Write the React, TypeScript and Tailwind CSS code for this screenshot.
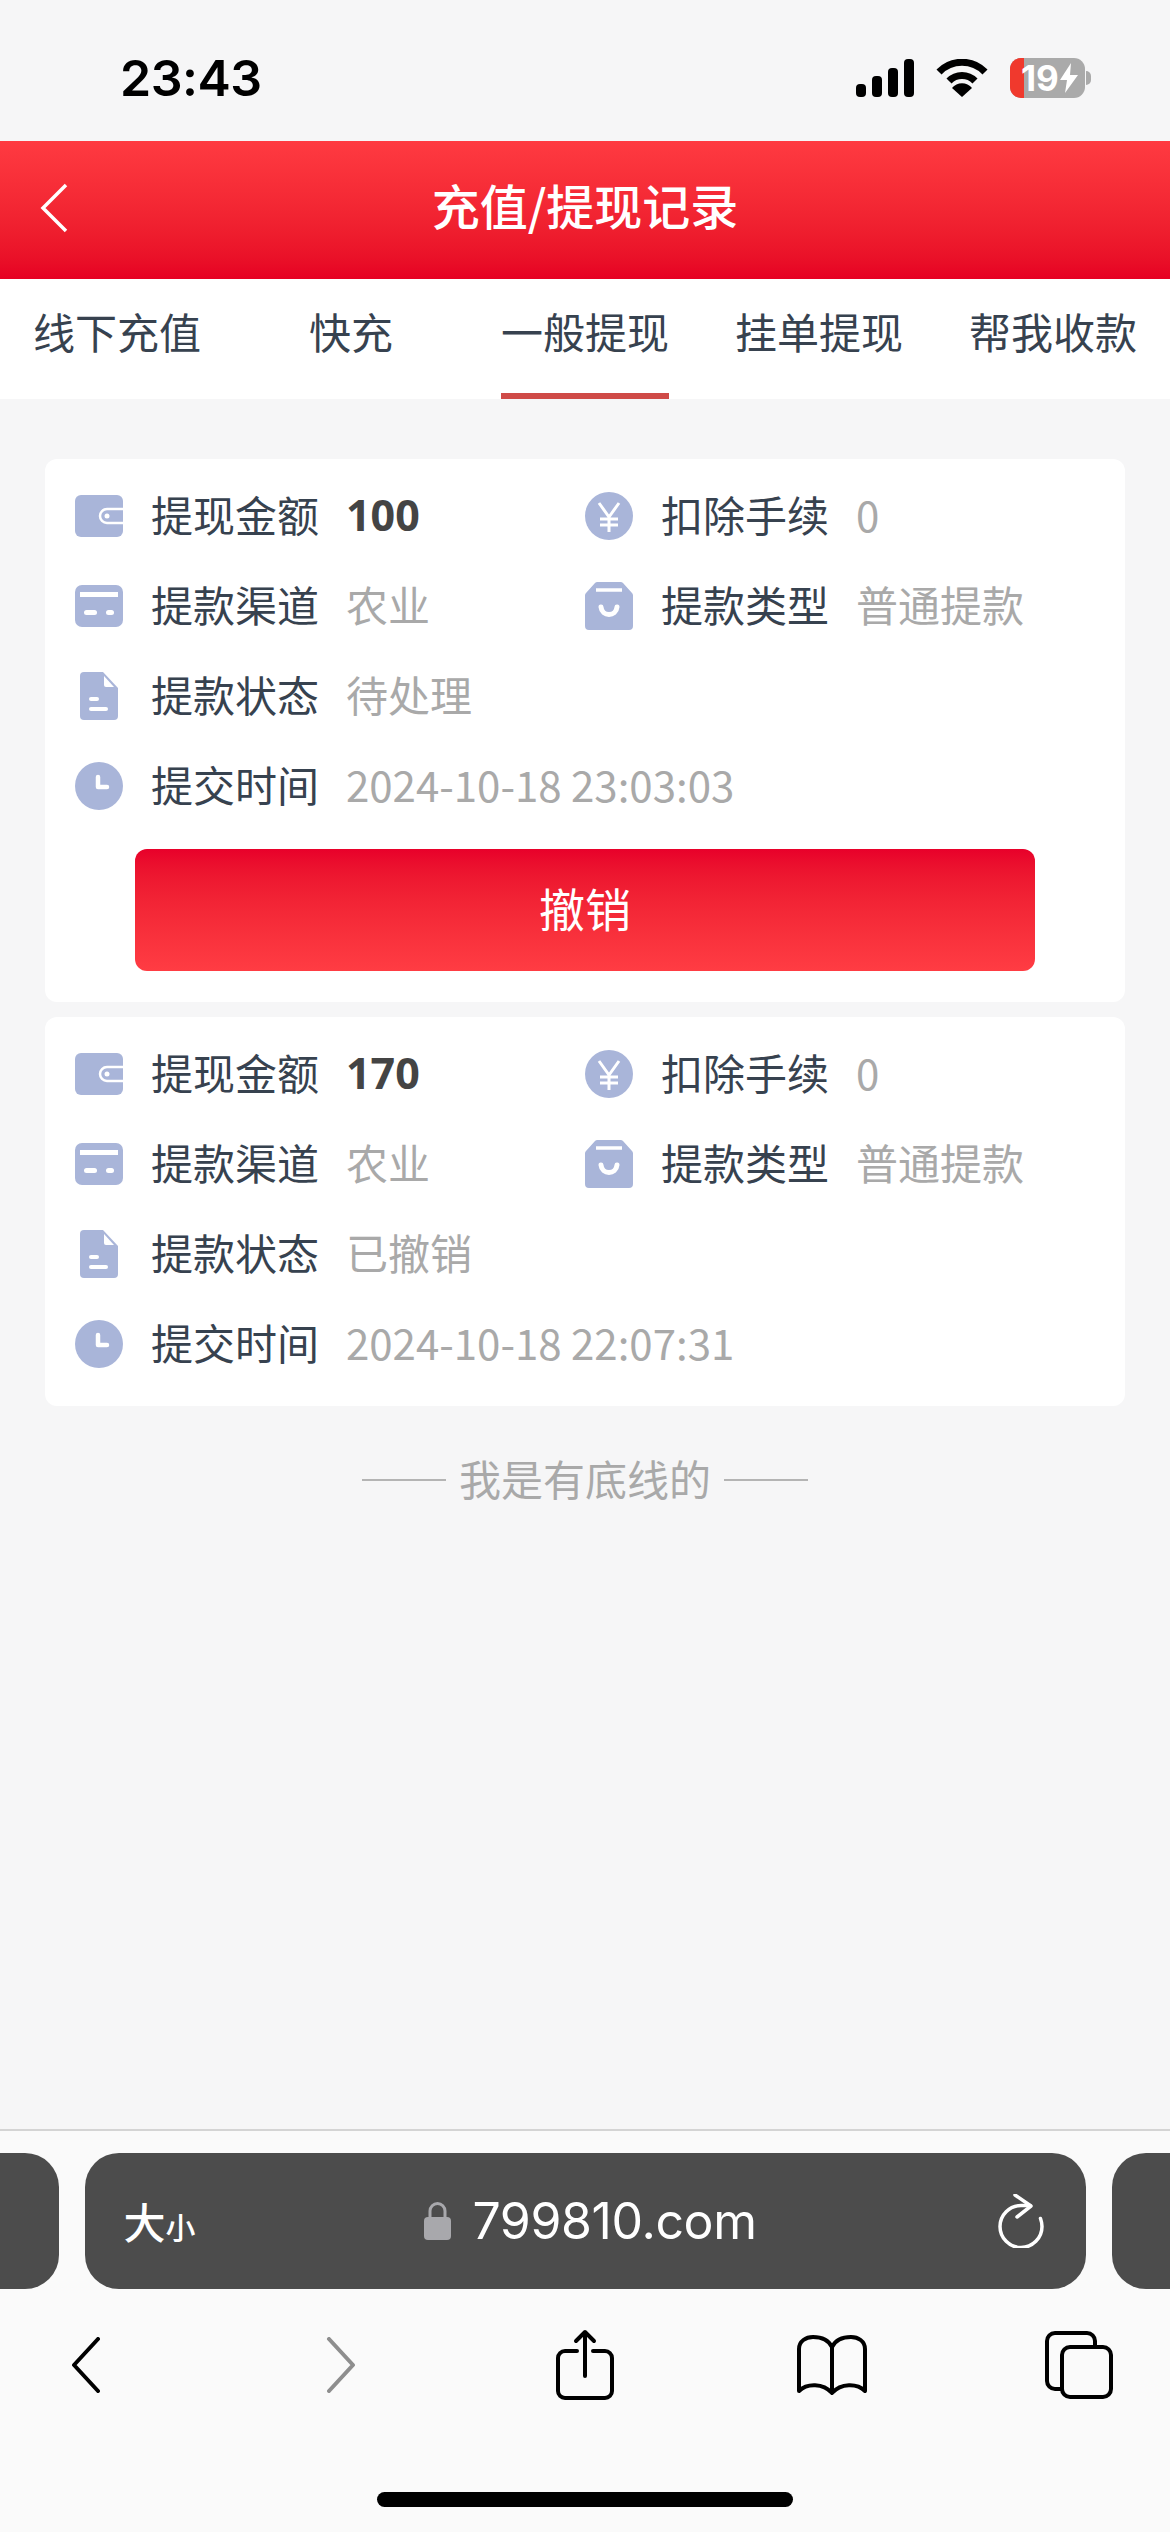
import type { ReactNode } from "react";

const tabs = ["线下充值", "快充", "一般提现", "挂单提现", "帮我收款"];

const WalletIcon = () => (
  <svg width="48" height="42" viewBox="0 0 48 42">
    <path d="M6 0h36a6 6 0 0 1 6 6v30a6 6 0 0 1-6 6H6a6 6 0 0 1-6-6V6a6 6 0 0 1 6-6z" fill="#a9b5d9" />
    <path d="M48 14H32a7 7 0 0 0 0 14h16" fill="none" stroke="#fff" strokeWidth="2.500" />
    <circle cx="32" cy="21" r="2.500" fill="#fff" />
  </svg>
);

const CardIcon = () => (
  <svg width="48" height="42" viewBox="0 0 48 42">
    <rect width="48" height="42" rx="7" fill="#a9b5d9" />
    <rect x="5" y="7" width="38" height="5" fill="#fff" />
    <rect x="9" y="25" width="13" height="5" rx="2.500" fill="#fff" />
    <rect x="31" y="25" width="8" height="5" rx="2.500" fill="#fff" />
  </svg>
);

const DocIcon = () => (
  <svg width="38" height="48" viewBox="0 0 38 48">
    <path d="M4 0h19l15 16v28a4 4 0 0 1-4 4H4a4 4 0 0 1-4-4V4a4 4 0 0 1 4-4z" fill="#a9b5d9" />
    <path d="M24 4l10 11h-8a2 2 0 0 1-2-2z" fill="#fff" />
    <rect x="9" y="25" width="10" height="4" rx="2" fill="#fff" />
    <rect x="9" y="35" width="19" height="4" rx="2" fill="#fff" />
  </svg>
);

const ClockIcon = () => (
  <svg width="48" height="48" viewBox="0 0 48 48">
    <circle cx="24" cy="24" r="24" fill="#a9b5d9" />
    <path d="M23 15v10h9" fill="none" stroke="#fff" strokeWidth="4.500" strokeLinecap="round" strokeLinejoin="round" />
  </svg>
);

const YuanIcon = () => (
  <svg width="48" height="48" viewBox="0 0 48 48">
    <circle cx="24" cy="24" r="24" fill="#a9b5d9" />
    <path d="M14 11l10 14 10-14M24 25v15M15 27h18M15 33h18" fill="none" stroke="#fff" strokeWidth="3" />
  </svg>
);

const BagIcon = () => (
  <svg width="48" height="48" viewBox="0 0 48 48">
    <path d="M13 0h22a4 4 0 0 1 3 1l9 10a4 4 0 0 1 1 3v30a4 4 0 0 1-4 4H4a4 4 0 0 1-4-4V14a4 4 0 0 1 1-3l9-10a4 4 0 0 1 3-1z" fill="#a9b5d9" />
    <path d="M11 8h26" stroke="#fff" strokeWidth="3.500" />
    <path d="M16 25c1 10 15 10 16 0" fill="none" stroke="#fff" strokeWidth="5" strokeLinecap="round" />
  </svg>
);

const Field = ({
  icon,
  label,
  children,
  wide,
}: {
  icon: ReactNode;
  label: string;
  children: ReactNode;
  wide?: boolean;
}) => (
  <div className={`flex items-center ${wide ? "w-[510px]" : ""}`}>
    <div className="flex w-[48px] items-center justify-center">{icon}</div>
    <span className="ml-[28px] w-[196px] pb-[5px] text-[42px] leading-none text-[#37424f]">{label}</span>
    {children}
  </div>
);

const Muted = ({ children }: { children: ReactNode }) => (
  <span className="-ml-px pb-[5px] text-[42px] leading-none whitespace-nowrap text-[#a9a9a9]">{children}</span>
);

const RecordCard = ({
  amount,
  status,
  time,
  cancellable,
}: {
  amount: string;
  status: string;
  time: string;
  cancellable?: boolean;
}) => (
  <div className={`rounded-[12px] bg-white px-[30px] pt-[12px] ${cancellable ? "pb-[31px]" : "pb-[17px]"}`}>
    <div className="flex h-[90px] items-center">
      <Field wide icon={<WalletIcon />} label="提现金额">
        <span className="-ml-px pb-[3px] text-[43px] leading-none font-bold text-[#444444]" style={{ fontFamily: '"Open Sans", sans-serif' }}>
          {amount}
        </span>
      </Field>
      <Field icon={<YuanIcon />} label="扣除手续">
        <Muted>0</Muted>
      </Field>
    </div>
    <div className="flex h-[90px] items-center">
      <Field wide icon={<CardIcon />} label="提款渠道">
        <Muted>农业</Muted>
      </Field>
      <Field icon={<BagIcon />} label="提款类型">
        <Muted>普通提款</Muted>
      </Field>
    </div>
    <div className="flex h-[90px] items-center">
      <Field icon={<DocIcon />} label="提款状态">
        <Muted>{status}</Muted>
      </Field>
    </div>
    <div className="flex h-[90px] items-center">
      <Field icon={<ClockIcon />} label="提交时间">
        <Muted>{time}</Muted>
      </Field>
    </div>
    {cancellable && (
      <button className="mx-auto mt-[18px] flex h-[122px] w-[900px] items-center justify-center rounded-[12px] bg-gradient-to-b from-[#e8002a] to-[#ff3c43] pb-[6px] text-[46px] text-white">
        撤销
      </button>
    )}
  </div>
);

const StatusBar = () => (
  <div className="flex h-[141px] items-center justify-between pt-[15px] pr-[79px] pl-[120px]">
    <span className="text-[50px] leading-none font-semibold tracking-[-0.5px] text-black" style={{ fontFamily: "Inter, sans-serif" }}>
      23:43
    </span>
    <div className="flex items-center">
      <svg width="58" height="38" viewBox="0 0 58 38">
        <rect x="0" y="25" width="10" height="13" rx="4" fill="#000" />
        <rect x="16" y="17" width="10" height="21" rx="4" fill="#000" />
        <rect x="32" y="9" width="10" height="29" rx="4" fill="#000" />
        <rect x="48" y="0" width="10" height="38" rx="4" fill="#000" />
      </svg>
      <svg className="ml-[22px]" width="52" height="38" viewBox="0 0 52 38">
        <path d="M3 13a32 32 0 0 1 46 0" fill="none" stroke="#000" strokeWidth="7" />
        <path d="M13 22a18 18 0 0 1 26 0" fill="none" stroke="#000" strokeWidth="7" />
        <path d="M26 38L16 29a13 13 0 0 1 20 0z" fill="#000" />
      </svg>
      <div className="relative ml-[22px] flex h-[40px] w-[75px] items-center overflow-hidden rounded-[11px] bg-[#aaaaaa] pl-[11px] text-white">
        <div className="absolute top-0 bottom-0 left-0 w-[14px] bg-[#f0392d]" />
        <span className="relative text-[35px] leading-none font-bold" style={{ fontFamily: "Inter, sans-serif" }}>
          19
        </span>
        <svg className="relative" width="20" height="30" viewBox="0 0 20 30">
          <path d="M12 0L1 17h7l-2 13 13-18h-8z" fill="#fff" />
        </svg>
      </div>
      <div className="ml-[1px] h-[14px] w-[5px] rounded-r-full bg-[#aaaaaa]" />
    </div>
  </div>
);

const BrowserChrome = () => (
  <div className="h-[403px] border-t-2 border-[#d4d4d4] bg-[#fafafa]">
    <div className="flex justify-center gap-[26px] overflow-hidden pt-[22px]">
      <div className="h-[136px] w-[1001px] shrink-0 rounded-[34px] bg-[#4c4c4c]" />
      <div className="flex h-[136px] w-[1001px] shrink-0 items-center justify-between rounded-[34px] bg-[#4c4c4c] pr-[42px] pl-[39px] text-white">
        <div className="flex w-[60px] items-baseline leading-none whitespace-nowrap">
          <span className="text-[42px] font-medium">大</span>
          <span className="text-[30px] font-medium">小</span>
        </div>
        <div className="flex items-center">
          <svg width="27" height="38" viewBox="0 0 27 38">
            <path d="M6 17V9a7.500 7.500 0 0 1 15 0v8" fill="none" stroke="#a8a8ac" strokeWidth="3" />
            <rect y="15" width="27" height="23" rx="4" fill="#a8a8ac" />
          </svg>
          <span className="ml-[21px] text-[50px] leading-none tracking-[-0.4px]" style={{ fontFamily: "Inter, sans-serif" }}>
            799810.com
          </span>
        </div>
        {/* reload: open circle with the arrow head at twelve o'clock */}
        <svg width="46" height="54" viewBox="0 0 46 54" fill="none" stroke="#fff" strokeWidth="3.500" strokeLinecap="round" strokeLinejoin="round">
          <path d="M32 11.500h-9a21 21 0 1 0 21 21c0-3-.6-5.500-1.500-8" />
          <path d="M17 1l16 11-14 11" />
        </svg>
      </div>
      <div className="h-[136px] w-[1001px] shrink-0 rounded-[34px] bg-[#4c4c4c]" />
    </div>
    <div className="flex h-[195px] items-start pt-[40px] pl-[46px]">
      <div className="flex h-[72px] w-[80px] items-center justify-center">
        <svg width="30" height="56" viewBox="0 0 30 56" fill="none" stroke="#000" strokeWidth="4" strokeLinecap="round" strokeLinejoin="round">
          <path d="M27 2L3 28l24 26" />
        </svg>
      </div>
      <div className="ml-[175px] flex h-[72px] w-[80px] items-center justify-center">
        <svg width="30" height="56" viewBox="0 0 30 56" fill="none" stroke="#8e8e8e" strokeWidth="4" strokeLinecap="round" strokeLinejoin="round">
          <path d="M3 2l24 26L3 54" />
        </svg>
      </div>
      <div className="ml-[164px] flex h-[72px] w-[80px] items-center justify-center">
        <svg width="58" height="72" viewBox="0 0 58 72" fill="none" stroke="#000" strokeWidth="4" strokeLinecap="round" strokeLinejoin="round">
          <path d="M21 22H9a7 7 0 0 0-7 7v33a7 7 0 0 0 7 7h40a7 7 0 0 0 7-7V29a7 7 0 0 0-7-7H37" />
          <path d="M29 47V3M20 12l9-9 9 9" />
        </svg>
      </div>
      <div className="ml-[167px] flex h-[72px] w-[80px] items-center justify-center">
        <svg width="72" height="60" viewBox="0 0 72 60" fill="none" stroke="#000" strokeWidth="4" strokeLinejoin="round">
          <path d="M36 12C32 4 24 2 17 2 10 2 3 6 3 14v42c8-8 24-8 33 2 9-10 25-10 33-2V14c0-8-7-12-14-12-7 0-15 2-19 10zM36 12v46" />
        </svg>
      </div>
      <div className="ml-[167px] flex h-[72px] w-[80px] items-center justify-center">
        <svg width="68" height="68" viewBox="0 0 68 68" fill="none" stroke="#000" strokeWidth="4">
          <path d="M50 16V10a8 8 0 0 0-8-8H10a8 8 0 0 0-8 8v40a8 8 0 0 0 8 8h6" />
          <rect x="17" y="16" width="49" height="50" rx="8" />
        </svg>
      </div>
    </div>
    <div className="flex justify-center pt-[8px]">
      <div className="h-[15px] w-[416px] rounded-full bg-black" />
    </div>
  </div>
);

export default function App() {
  return (
    <div
      className="flex h-[2532px] w-[1170px] flex-col overflow-hidden bg-[#f6f6f7]"
      style={{ fontFamily: '"Noto Sans CJK SC", "Noto Sans", sans-serif' }}
    >
      <StatusBar />
      <header className="relative flex h-[138px] items-center justify-center bg-gradient-to-b from-[#ff3a41] to-[#e60023] pb-[12px]">
        <svg className="absolute top-[42px] left-[40px]" width="28" height="50" viewBox="0 0 28 50" fill="none" stroke="#fff" strokeWidth="3.500">
          <path d="M26 2L3 25l23 23" />
        </svg>
        <h1 className="text-[48px] leading-none font-medium text-white">充值/提现记录</h1>
      </header>
      <nav className="flex h-[120px] bg-white">
        {tabs.map((tab) => (
          <div key={tab} className="relative flex w-[234px] items-start justify-center pt-[30px] text-[42px] leading-[44px] text-[#37424f]">
            {tab}
            {tab === "一般提现" && <div className="absolute bottom-0 left-1/2 h-[6px] w-[168px] -translate-x-1/2 bg-[#cf4a47]" />}
          </div>
        ))}
      </nav>
      <main className="flex flex-1 flex-col gap-[15px] px-[45px] pt-[60px]">
        <RecordCard cancellable amount="100" status="待处理" time="2024-10-18 23:03:03" />
        <RecordCard amount="170" status="已撤销" time="2024-10-18 22:07:31" />
        <div className="mt-[36px] flex items-center justify-center gap-[13px] text-[#a9a9a9]">
          <div className="h-[2px] w-[84px] bg-[#b4b4b4]" />
          <p className="pb-[4px] text-[42px] leading-none">我是有底线的</p>
          <div className="h-[2px] w-[84px] bg-[#b4b4b4]" />
        </div>
      </main>
      <BrowserChrome />
    </div>
  );
}
